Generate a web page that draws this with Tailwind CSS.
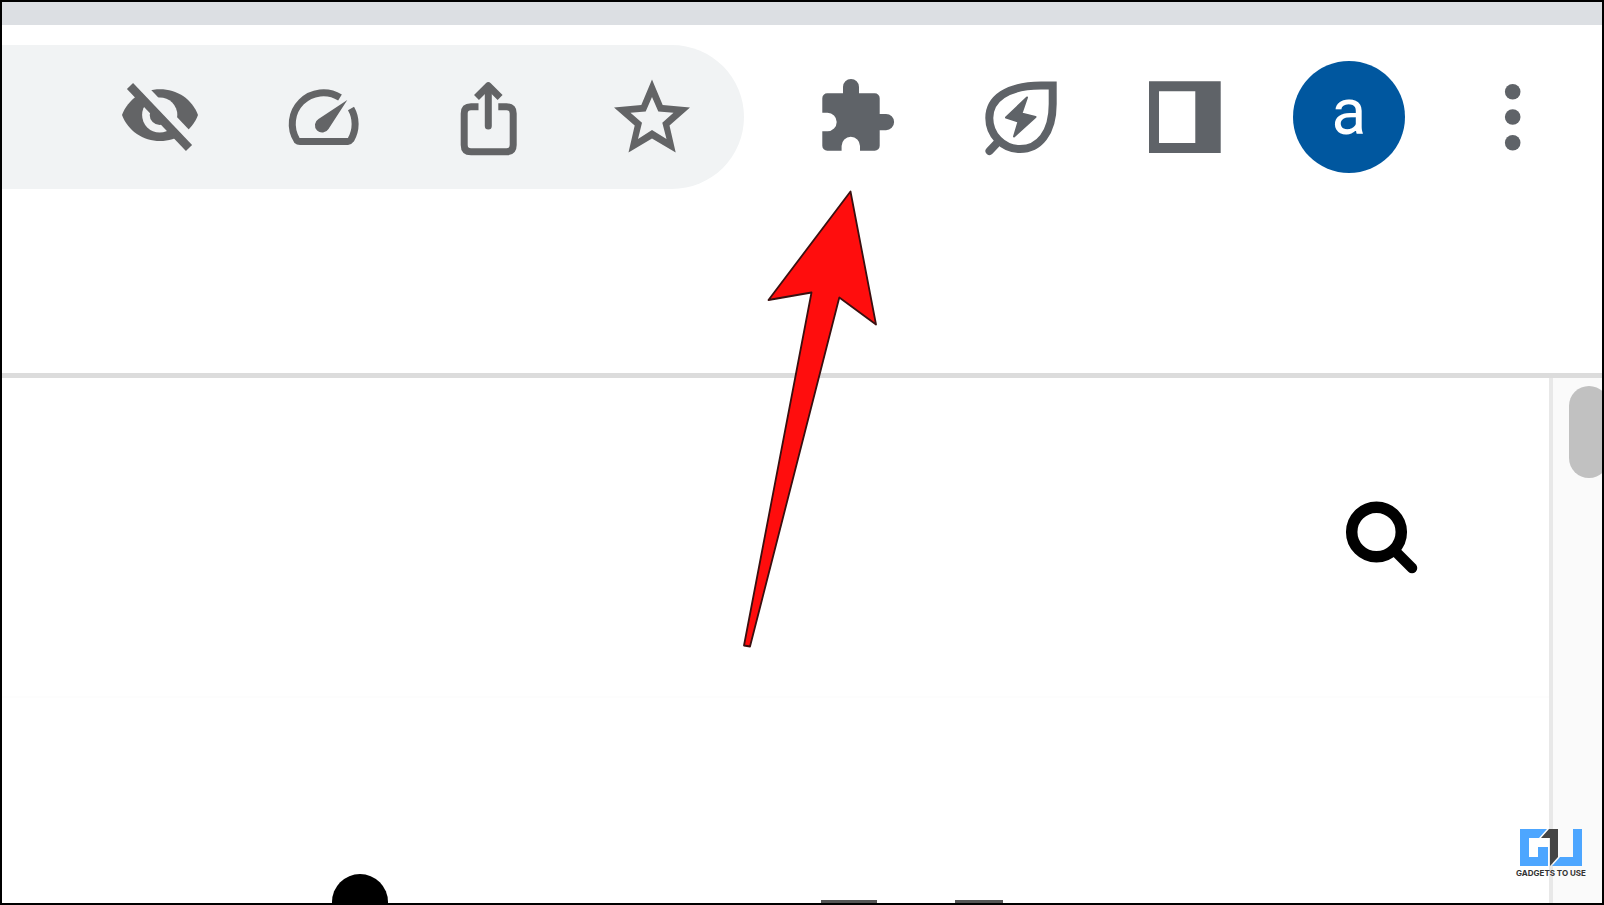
<!DOCTYPE html>
<html lang="en">
<head>
    <meta charset="UTF-8">
    <meta name="viewport" content="width=device-width, initial-scale=1.0">
    <title>Browser Toolbar</title>
    <script src="https://cdn.jsdelivr.net/npm/@tailwindcss/browser@4"></script>
</head>
<body class="relative flex flex-col h-screen overflow-hidden border-2 border-black bg-white font-['Roboto',sans-serif]">
    <!-- Tab strip -->
    <div class="h-[23px] shrink-0 bg-[#dcdfe3]"></div>

    <!-- Toolbar -->
    <header class="flex items-center shrink-0 pt-5 pb-46 pr-[49px] border-b-[5px] border-[#dcdcdc]">
        <div class="flex flex-1 items-center justify-end gap-[84px] h-36 pr-[52px] rounded-r-full bg-[#f1f3f4] text-[#636466]">
            <button type="button" aria-label="Third-party cookies blocked" class="size-20">
                <svg viewBox="0 0 80 80" class="size-20">
                    <path fill="currentColor" d="M2 38C8 22 23 12.3 40 12.3S72 22 78 38C72 54 57 64 40 64S8 54 2 38z"/>
                    <circle cx="39.7" cy="38" r="17.6" fill="#f1f3f4"/>
                    <circle cx="39.7" cy="38" r="10" fill="currentColor"/>
                    <path stroke="#f1f3f4" stroke-width="9" d="M16.5 4.2L76 66.5"/>
                    <path stroke="currentColor" stroke-width="8.5" d="M10 9L69 71"/>
                </svg>
            </button>
            <button type="button" aria-label="Performance" class="size-20">
                <svg viewBox="0 0 80 80" class="size-20">
                    <path fill="none" stroke="currentColor" stroke-width="7" d="M56 20.5A31.2 31.2 0 0 0 13 63.5Q14 64.5 16 64.5H64Q65.5 64.5 67 62.5A31.2 31.2 0 0 0 67 31.5"/>
                    <path fill="currentColor" d="M63.3 23L34.5 42A7.3 7.3 0 1 0 44.5 52z"/>
                </svg>
            </button>
            <button type="button" aria-label="Share" class="size-20">
                <svg viewBox="0 0 80 80" class="size-20" fill="none" stroke="currentColor" stroke-width="7">
                    <path d="M30.5 29.8H23Q16.2 29.8 16.2 36.5V68Q16.2 74.8 23 74.8H58.5Q65.2 74.8 65.2 68V36.5Q65.2 29.8 58.5 29.8H50.3"/>
                    <path stroke-linecap="round" d="M40.3 49V10"/>
                    <path stroke-linejoin="round" d="M28.5 20.5L40.3 8.7L52.1 20.5"/>
                </svg>
            </button>
            <button type="button" aria-label="Bookmark this tab" class="size-20">
                <svg viewBox="0 0 80 80" class="size-20">
                    <path fill="currentColor" fill-rule="evenodd" d="M40 2.5L50.7 28L78 30.5L57.5 48.5L63.7 75.5L40 61.5L16.5 75.5L22.7 48.5L2 30.5L29.3 28zM40 20L33.7 34.5L18.5 35.8L30 45.8L26 62L40 53L54.5 62L50.3 45.8L61.5 35.8L46.3 34.5z"/>
                </svg>
            </button>
        </div>

        <div class="flex items-center gap-[84px] ml-[73px] text-[#5f6368]">
            <div class="relative size-20">
                <button type="button" aria-label="Extensions" class="size-20">
                    <svg viewBox="0 0 80 80" class="size-20" fill="currentColor">
                        <path d="M10.3 16.3H26V10A8 8 0 0 1 42 10V16.3H57.7A5 5 0 0 1 62.7 21.3V37H69A8.1 8.1 0 0 1 69 53.2H62.7V68.7A5 5 0 0 1 57.7 73.7H43V69A9.2 9.2 0 0 0 24.6 69V73.7H10.3A5 5 0 0 1 5.3 68.7V54.2H10.5A9.2 9.2 0 0 0 10.5 35.8H5.3V21.3A5 5 0 0 1 10.3 16.3z"/>
                    </svg>
                </button>
                <!-- Pointer to the extensions button -->
                <svg viewBox="0 0 140 464" class="absolute z-10 -left-[77px] top-[111px] w-[140px] h-[464px] max-w-none pointer-events-none">
                    <path fill="#ff0d0d" stroke="#3a1010" stroke-width="1.8" stroke-linejoin="round" d="M110.5 3.5L136 136.5L99.3 109.5L10 458.5L4 457.5L71.5 104.5L28.5 112z"/>
                </svg>
            </div>
            <button type="button" aria-label="Energy Saver" class="size-20">
                <svg viewBox="0 0 80 80" class="size-20">
                    <path fill="none" stroke="currentColor" stroke-width="8" d="M71.7 8.5H60C26 8.5 8.3 22 8.3 41C8.3 58 22 72 39 72C58 72 71.7 56 71.7 27z"/>
                    <path stroke="currentColor" stroke-width="8" stroke-linecap="round" d="M17 65L8.5 74"/>
                    <path fill="currentColor" stroke="currentColor" stroke-width="2" stroke-linejoin="round" d="M46 20.5L25 40.5L37.5 44.5L33 59.5L54.5 40L40.5 36.5z"/>
                </svg>
            </button>
            <button type="button" aria-label="Side panel" class="size-20">
                <svg viewBox="0 0 80 80" class="size-20">
                    <path fill="currentColor" fill-rule="evenodd" d="M4 4.3H75.7V76H4zM14 14.3V66H50.3V14.3z"/>
                </svg>
            </button>
            <button type="button" aria-label="Profile" class="-mx-4 size-28 rounded-full bg-[#00579f] text-white text-[64px] leading-none font-normal pb-2">a</button>
            <button type="button" aria-label="Menu" class="size-20">
                <svg viewBox="0 0 80 80" class="size-20" fill="currentColor">
                    <circle cx="39.7" cy="14.7" r="7.8"/>
                    <circle cx="39.7" cy="40" r="7.8"/>
                    <circle cx="39.7" cy="65.7" r="7.8"/>
                </svg>
            </button>
        </div>
    </header>

    <!-- Page -->
    <div class="flex flex-1 min-h-0">
        <main class="flex flex-1 flex-col justify-between">
            <div class="flex items-start justify-end h-80 pt-[120px] pr-[127px] border-b-2 border-[#fdfdfd]">
                <button type="button" aria-label="Search" class="size-20">
                    <svg viewBox="0 0 80 80" class="size-20" fill="none" stroke="#000">
                        <circle cx="34.5" cy="34" r="24.8" stroke-width="11.5"/>
                        <path stroke-width="10.5" stroke-linecap="round" d="M53 53L70 70"/>
                    </svg>
                </button>
            </div>
            <!-- Top of the headline, cut off by the window -->
            <div class="flex items-end h-[29px] pl-[330px] overflow-hidden">
                <div class="w-14 h-[29px] rounded-t-full bg-black"></div>
                <div class="w-14 h-[3px] ml-[433px] bg-[#555555]"></div>
                <div class="w-12 h-[3px] ml-[78px] bg-[#555555]"></div>
            </div>
        </main>
        <div class="w-[53px] shrink-0 pt-2 pl-4 overflow-hidden border-l-4 border-[#e8e8e8] bg-[#fafafa]">
            <div class="w-10 h-[92px] rounded-full bg-[#c1c1c1]"></div>
        </div>
    </div>

    <!-- Watermark -->
    <div class="absolute right-[15px] bottom-[25px] flex w-[72px] flex-col items-center gap-[2px]">
        <svg viewBox="0 0 62 37" class="w-[62px] h-[37px]">
            <path fill="#4da6ff" d="M0 0H27L19 9H9V28H18V18H28V37H0z"/>
            <path fill="#454545" d="M29 0H38V28L30 37V9H21z"/>
            <path fill="#4da6ff" d="M53 0H62V37H32L40 28H53z"/>
        </svg>
        <span class="font-['Inter',sans-serif] text-[8px] leading-[10px] font-bold whitespace-nowrap text-[#333333]">GADGETS TO USE</span>
    </div>
</body>
</html>
